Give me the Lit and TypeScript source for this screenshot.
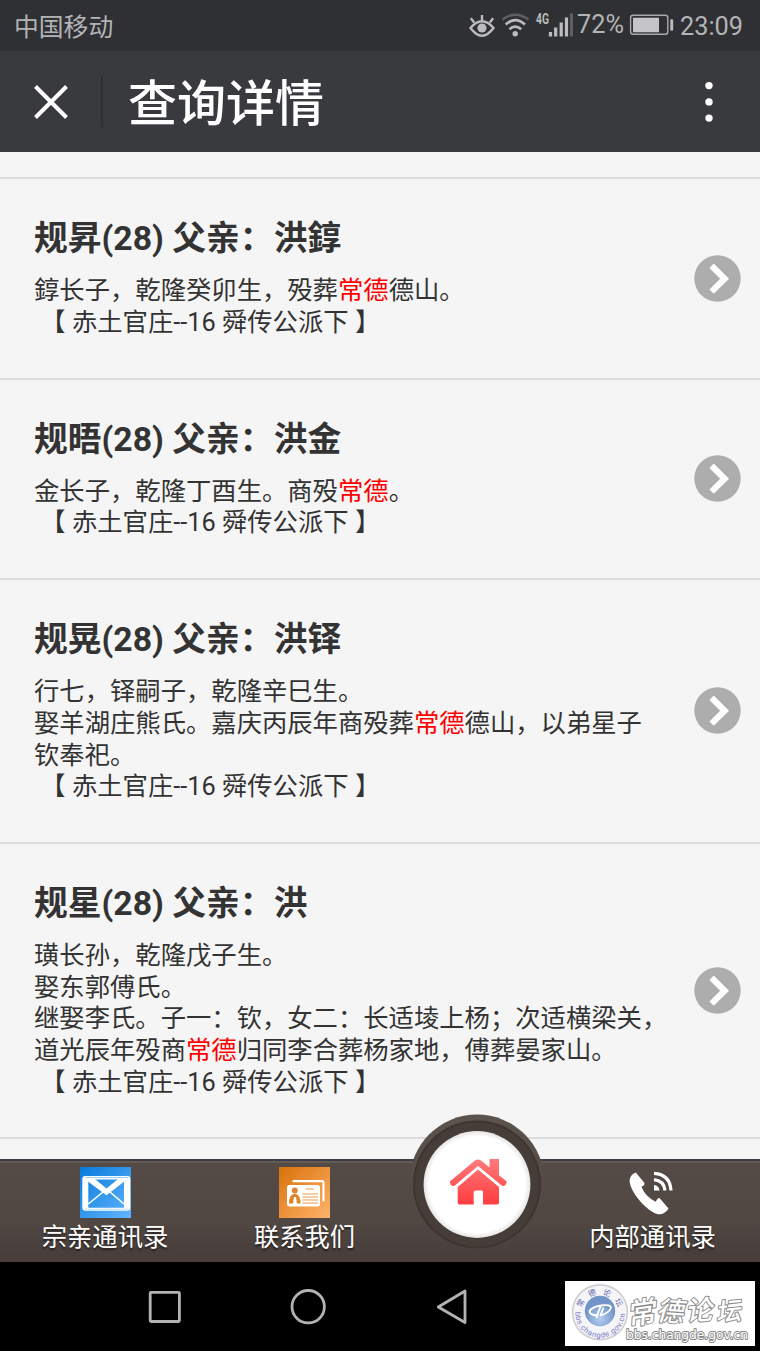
import { LitElement, html, css, svg } from "lit";
import { customElement, property } from "lit/decorators.js";

interface Entry {
  name: string;
  father: string;
  lines: string[];
}

const KEYWORD = "常德";
const BRANCH = "\u00a0【\u00a0赤土官庄--16\u00a0舜传公派下\u00a0】";

const ENTRIES: Entry[] = [
  { name: "规昇(28)", father: "洪錞", lines: ["錞长子，乾隆癸卯生，殁葬常德德山。"] },
  { name: "规晤(28)", father: "洪金", lines: ["金长子，乾隆丁酉生。商殁常德。"] },
  {
    name: "规晃(28)",
    father: "洪铎",
    lines: ["行七，铎嗣子，乾隆辛巳生。", "娶羊湖庄熊氏。嘉庆丙辰年商殁葬常德德山，以弟星子", "钦奉祀。"],
  },
  {
    name: "规星(28)",
    father: "洪",
    lines: [
      "璜长孙，乾隆戊子生。",
      "娶东郭傅氏。",
      "继娶李氏。子一：钦，女二：长适堎上杨；次适横梁关，",
      "道光辰年殁商常德归同李合葬杨家地，傅葬晏家山。",
    ],
  },
];

@customElement("status-bar")
class StatusBar extends LitElement {
  static styles = css`
    :host { display: flex; height: 51px; background: #2f3034; color: #b4b4b6; padding: 0 16px 0 14px; box-sizing: border-box; }
    .carrier { font-size: 24.8px; line-height: 55px; height: 51px; flex: 1; }
    .icons { flex: none; display: block; }
    .pct { width: 49px; font-size: 25.3px; line-height: 50px; white-space: nowrap; }
    .time { width: 64px; font-size: 25.3px; line-height: 54px; height: 51px; white-space: nowrap; }
  `;
  render() {
    return html`
      <span class="carrier">中国移动</span>
      <svg class="icons" width="109" height="51" viewBox="468 0 109 51" fill="none" stroke="#bcbcbe">
        <path d="M470.5 28Q482 14.5 493.5 28Q482 43.5 470.5 28Z" stroke-width="2.4" />
        <circle cx="482" cy="28" r="4.6" fill="#bcbcbe" stroke="none" />
        <path d="M482 20.5V15M474.2 22.5L470.8 18.3M489.8 22.5L493.2 18.3" stroke-width="2.4" />
        <path d="M502.5 19.5Q515 10 528.5 19.5" stroke="#5e5f63" stroke-width="2.2" />
        <path d="M505.7 24.5Q515.3 15.8 525 24.5M509.4 29.3Q515.3 24 521.2 29.3" stroke-width="2.6" />
        <circle cx="515.2" cy="33.7" r="2.7" fill="#bcbcbe" stroke="none" />
        <text x="536" y="24" textLength="13" lengthAdjust="spacingAndGlyphs" font-family="Roboto,sans-serif" font-weight="700" font-size="14" fill="#bcbcbe" stroke="none">4G</text>
        <path d="M550.5 32V36.5M555.7 27.5V36.5M561.2 22.5V36.5M566.5 17.5V36.5" stroke-width="3.2" />
        <path d="M571.5 13.5V36.5" stroke="#5e5f63" stroke-width="3" />
      </svg>
      <span class="pct">72%</span>
      <svg class="icons" width="54" height="51" viewBox="626 0 54 51">
        <rect x="630.6" y="15.2" width="37.2" height="19" rx="2.5" fill="none" stroke="#a9a9ab" stroke-width="1.4" />
        <path d="M633 17.7H659V32.3H633Z" fill="#c5c5c7" />
        <rect x="670.3" y="19.3" width="2.9" height="11.4" rx="1.2" fill="#bcbcbe" />
      </svg>
      <span class="time">23:09</span>
    `;
  }
}

@customElement("title-bar")
class TitleBar extends LitElement {
  static styles = css`
    :host { display: flex; align-items: center; height: 101px; background: #393a3e; color: #fff; box-sizing: border-box; padding: 0 44px 0 33px; }
    .close { display: block; margin-right: 32px; }
    .divider { width: 1.5px; height: 50px; background: #2e2f33; margin-right: 25.5px; }
    .title { flex: 1; font-size: 49px; line-height: 70px; padding-top: 6px; font-weight: 500; }
  `;
  render() {
    return html`
      <svg class="close" width="36" height="36" viewBox="0 0 36 36"><path d="M2.5 2.5L33.5 33.5M33.5 2.5L2.5 33.5" stroke="#fff" stroke-width="4" /></svg>
      <span class="divider"></span>
      <span class="title">查询详情</span>
      <svg width="14" height="42" viewBox="0 0 14 42" fill="#fff"><circle cx="7" cy="4.6" r="3.7" /><circle cx="7" cy="20.9" r="3.7" /><circle cx="7" cy="37.1" r="3.7" /></svg>
    `;
  }
}

@customElement("entry-row")
class EntryRow extends LitElement {
  @property({ attribute: false }) entry!: Entry;
  static styles = css`
    :host { display: flex; align-items: center; box-sizing: border-box; border-bottom: 2px solid #dcdcdc; padding: 33.2px 19px 39px 34px; }
    .copy { flex: 1; color: #333; }
    .heading { margin: 0; font-size: 33.78px; line-height: 54px; font-weight: 700; white-space: pre; }
    .detail { margin-top: 9px; font-size: 25.33px; line-height: 31.67px; white-space: nowrap; }
    .hit { color: #f00; }
    .arrow { flex: none; width: 47px; height: 47px; position: relative; top: 2.8px; }
  `;
  private line(text: string) {
    const parts = text.split(KEYWORD);
    return html`<div>${parts.map((p, i) => (i ? html`<span class="hit">${KEYWORD}</span>${p}` : p))}</div>`;
  }
  render() {
    const e = this.entry;
    return html`
      <div class="copy">
        <h2 class="heading">${e.name} 父亲：${e.father}</h2>
        <div class="detail">${e.lines.map((l) => this.line(l))}${this.line(BRANCH)}</div>
      </div>
      <svg class="arrow" viewBox="0 0 47 47"><circle cx="23.5" cy="23.5" r="23.2" fill="#adadad" /><path d="M17.6 10.8L30.6 23.7L17.6 36.6" fill="none" stroke="#fff" stroke-width="6.2" /></svg>
    `;
  }
}

@customElement("tab-bar")
class TabBar extends LitElement {
  static styles = css`
    :host { display: grid; grid-template-columns: 210px 189px 145px 217px; height: 103px; box-sizing: border-box; border-top: 2px solid #3c3d47; background: linear-gradient(#645b55 0 2px, #544a46 2px, #514743 60%, #463d3a); position: relative; }
    .tab { display: flex; flex-direction: column; align-items: center; padding-top: 6px; color: #fff; font-size: 25.3px; line-height: 34px; text-shadow: 0 2px 2px rgba(0, 0, 0, 0.55); white-space: nowrap; }
    .icon { display: block; width: 51px; height: 51px; margin-bottom: 3px; }
    .home { position: absolute; left: 407px; top: -51px; width: 140px; height: 140px; }
  `;
  render() {
    return html`
      <div class="tab">
        <svg class="icon" viewBox="0 0 51 51">
          <defs><linearGradient id="b" gradientUnits="userSpaceOnUse" x1="0" y1="0" x2="51" y2="51"><stop stop-color="#087adb" /><stop offset="1" stop-color="#62b4ff" /></linearGradient></defs>
          <path d="M0 0H51V51H0Z" fill="url(#b)" />
          <rect x="2.3" y="9" width="48" height="34.7" rx="3" fill="#fff" />
          <path d="M8.3 12.5H44V40.8H8.3Z" fill="url(#b)" />
          <path d="M5 10.6H48" stroke="#7dbdf5" stroke-width=".8" /><path d="M5 42.2H48" stroke="#a5d2fb" stroke-width=".7" />
          <path d="M8.3 37L23 25M44 37L30 25" stroke="#fff" stroke-width="1.6" />
          <path d="M6.5 11.2H14L26.5 21.5L39 11.2H45.5V13.5L26.5 28.3L6.5 13.5Z" fill="#fff" />
        </svg>
        <span>宗亲通讯录</span>
      </div>
      <div class="tab">
        <svg class="icon" viewBox="0 0 51 51">
          <defs><linearGradient id="o" x2="1" y2="1"><stop stop-color="#d8710a" /><stop offset="1" stop-color="#ffb46b" /></linearGradient></defs>
          <path d="M0 0H51V51H0Z" fill="url(#o)" />
          <path d="M14.5 14.2H43Q44.5 14.2 44.5 16V33.5" fill="none" stroke="#fff" stroke-width="2.2" stroke-linecap="round" />
          <rect x="8" y="18" width="33" height="21.6" rx="2.5" fill="#fff" />
          <circle cx="15.8" cy="23.5" r="2.9" fill="#df8529" />
          <path d="M10 36.5Q9.5 29 14.5 27H17Q22 29 21.5 36.5H18L17 30H15L14 36.5Z" fill="#df8529" />
          <path d="M27 22H35M23.5 27H39M23.5 30H39M23.5 33H39M23.5 36H39" stroke="#e99b4a" stroke-width="1.2" />
        </svg>
        <span>联系我们</span>
      </div>
      <span></span>
      <div class="tab">
        <svg class="icon" viewBox="0 0 51 51">
          <path d="M8.8 5.5L17.5 16Q17.8 18.5 14.5 19.5C17 26.5 22 31.5 29 34.8Q29.8 31.2 32.5 31L41.5 41.5C38 47.5 32 48.8 26.5 45.5C16 39.5 5 26 2.8 16C2 10.5 4.8 7 8.8 5.5Z" fill="#fff" />
          <path d="M27 18Q32 18.5 32.5 23.5H27Z" fill="#fff" />
          <path d="M27 12.6Q37 13.5 38 23.5M27 6.3Q43 7.3 44 23.5" fill="none" stroke="#fff" stroke-width="3.2" />
        </svg>
        <span>内部通讯录</span>
      </div>
      <svg class="home" viewBox="0 0 140 140">
        <defs>
          <linearGradient id="ring" x2="0" y2="1"><stop stop-color="#5c534c" /><stop offset=".5" stop-color="#554b46" /><stop offset="1" stop-color="#4d4440" /></linearGradient>
          <linearGradient id="roof" gradientUnits="userSpaceOnUse" x1="0" y1="49" x2="0" y2="94"><stop stop-color="#ff7b7b" /><stop offset="1" stop-color="#ff3d41" /></linearGradient>
          <radialGradient id="disc"><stop offset=".9" stop-color="#fff" /><stop offset="1" stop-color="#e6e4e4" /></radialGradient>
        </defs>
        <circle cx="70" cy="72" r="67.5" fill="url(#ring)" />
        <circle cx="70" cy="74.5" r="64" fill="#3e3532" />
        <circle cx="70" cy="74.5" r="62" fill="#463d39" />
        <circle cx="70" cy="74.5" r="53.4" fill="url(#disc)" />
        <path d="M42.8 71.5L67 51.2Q71 48 75 51.2L82.5 57.5V49H92V65.3L99.8 71.5Q98.5 77 95 75.8L71 56L47.5 75.8Q43.5 77 42.8 71.5Z" fill="url(#roof)" />
        <path d="M71 59.5L92 77V92.5Q92 94.5 90 94.5H76V82.2Q76 80.5 74.5 80.5H68.5Q66.7 80.5 66.7 82.2V94.5H52.5Q50.7 94.5 50.7 92.5V77Z" fill="url(#roof)" />
      </svg>
    `;
  }
}

@customElement("nav-bar")
class NavBar extends LitElement {
  static styles = css`
    :host { display: flex; height: 89px; background: #000; }
    .keys { flex: none; display: block; width: 565px; height: 89px; }
    .mark { display: block; width: 190px; height: 65px; margin-top: 19px; background: #fff; }
  `;
  render() {
    const brush = [["常", 78, 31, 29, -8], ["德", 107, 30, 27, 4], ["论", 136, 29, 27, -4], ["坛", 165, 30, 25, -6]] as const;
    const seal = [["常", 15.5, 22, -62], ["德", 27, 12, -22], ["论", 42, 12, 20], ["坛", 54, 21.5, 60]] as const;
    return html`
      <svg class="keys" viewBox="0 1262 565 89" fill="none" stroke="#b3b3b3" stroke-width="2.8" stroke-linejoin="round">
        <rect x="150.2" y="1292.3" width="29.2" height="29.2" rx="1" />
        <circle cx="308.2" cy="1306.7" r="16.2" />
        <path d="M438.3 1307L465 1291V1322.5Z" />
      </svg>
      <svg class="mark" viewBox="0 0 190 65">
        <defs>
          <radialGradient id="g" cx=".5" cy=".75"><stop stop-color="#b4d0f0" /><stop offset="1" stop-color="#7394c8" /></radialGradient>
          <path id="bottom" d="M10.6 28A24.8 24.8 0 1 0 59.6 28" />
        </defs>
        <circle cx="35" cy="31.3" r="27.4" fill="#f5f5f8" stroke="#cfcfd4" stroke-width="1.6" />
        <circle cx="35" cy="30" r="15.2" fill="url(#g)" />
        <path d="M33 34.5Q24 34 24.5 30Q27 26 36 24.5Q33 31 31.5 37M36 24.5Q46 23 46 27Q44 32 35.5 34.5L38.5 26.5" fill="none" stroke="#fff" stroke-width="1.8" stroke-linejoin="round" />
        <g font-family="'Noto Sans CJK SC',sans-serif" font-size="7.8" fill="#6667b3" text-anchor="middle">
          ${seal.map(([c, x, y, r]) => svg`<text transform=${`translate(${x} ${y}) rotate(${r})`} y="2.8">${c}</text>`)}
        </g>
        <text font-family="'Liberation Sans',sans-serif" font-size="7.6" fill="#7777c8"><textPath href="#bottom" textLength="78" startOffset="3">bbs.changde.gov.cn</textPath></text>
        <g fill="#fff" stroke="#8a8a8a" stroke-width="2" paint-order="stroke" stroke-linejoin="round">
          ${brush.map(([c, x, y, s, r]) => svg`<text transform=${`translate(${x} ${y}) rotate(${r}) skewX(-12)`} y=${s * 0.37} text-anchor="middle" font-size=${s} font-weight="500" font-family="'Noto Sans CJK SC',sans-serif">${c}</text>`)}
          <text x="61" y="57.5" textLength="122" lengthAdjust="spacingAndGlyphs" font-size="13" font-family="'DejaVu Sans',sans-serif">bbs.changde.gov.cn</text>
        </g>
      </svg>
    `;
  }
}

@customElement("app-root")
class AppRoot extends LitElement {
  static styles = css`
    :host { display: flex; flex-direction: column; width: 760px; height: 1351px; overflow: hidden; background: #f5f5f5; font-family: Roboto, "Noto Sans CJK SC", sans-serif; }
    .list { flex: 1; min-height: 0; overflow: hidden; }
    .previous { height: 25px; border-bottom: 2px solid #dcdcdc; }
  `;
  render() {
    return html`
      <status-bar></status-bar>
      <title-bar></title-bar>
      <main class="list">
        <div class="previous"></div>
        ${ENTRIES.map((entry) => html`<entry-row .entry=${entry}></entry-row>`)}
      </main>
      <tab-bar></tab-bar>
      <nav-bar></nav-bar>
    `;
  }
}
